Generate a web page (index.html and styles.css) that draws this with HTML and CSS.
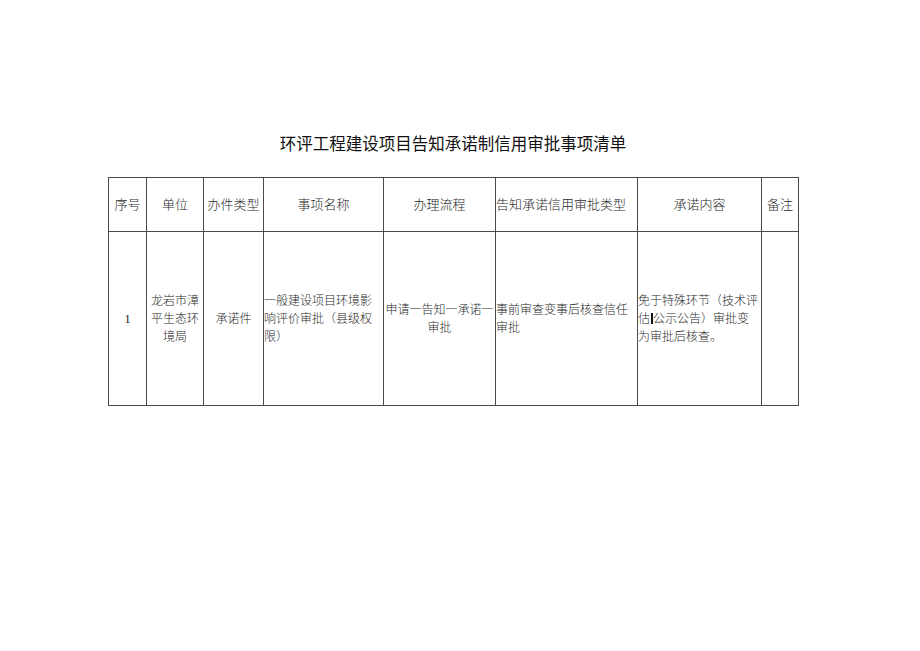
FILE: index.html
```html
<!DOCTYPE html>
<html lang="zh-CN">
<head>
<meta charset="utf-8">
<title>环评工程建设项目告知承诺制信用审批事项清单</title>
<link rel="stylesheet" href="styles.css">
</head>
<body>
<div class="page">
  <div class="sheet">
    <h1 class="title">环评工程建设项目告知承诺制信用审批事项清单</h1>
    <table class="list">
      <colgroup>
        <col class="c1"><col class="c2"><col class="c3"><col class="c4"><col class="c5"><col class="c6"><col class="c7"><col class="c8">
      </colgroup>
      <thead>
        <tr class="head">
          <th>序号</th>
          <th>单位</th>
          <th>办件类型</th>
          <th>事项名称</th>
          <th>办理流程</th>
          <th class="left">告知承诺信用审批类型</th>
          <th>承诺内容</th>
          <th>备注</th>
        </tr>
      </thead>
      <tbody>
        <tr class="row">
          <td class="num">1</td>
          <td>龙岩市漳平生态环境局</td>
          <td>承诺件</td>
          <td class="left">一般建设项目环境影响评价审批（县级权限）</td>
          <td>申请一告知一承诺一审批</td>
          <td class="left">事前审查变事后核查信任审批</td>
          <td class="left">免于特殊环节（技术评估<span class="bar"></span>公示公告）审批变为审批后核查。</td>
          <td></td>
        </tr>
      </tbody>
    </table>
  </div>
</div>
</body>
</html>
```
FILE: styles.css
```css
html, body {
  margin: 0;
  padding: 0;
  background: #ffffff;
}

.page {
  width: 920px;
  height: 651px;
  padding: 131px 0 0 108px;
  box-sizing: border-box;
}

.sheet {
  width: 690px;
}

.title {
  margin: 0 0 22px 0;
  font-family: "Noto Sans CJK SC", sans-serif;
  font-weight: 400;
  font-size: 16.5px;
  line-height: 24px;
  color: #111111;
  text-align: center;
}

.list {
  border-collapse: collapse;
  table-layout: fixed;
  width: 690px;
  font-family: "Liberation Serif", "Noto Sans CJK SC", serif;
  color: #2a2a2a;
}

.c1 { width: 38px; }
.c2 { width: 57px; }
.c3 { width: 60px; }
.c4 { width: 120px; }
.c5 { width: 112px; }
.c6 { width: 142px; }
.c7 { width: 124px; }
.c8 { width: 37px; }

.list th,
.list td {
  border: 1px solid #4a4a4a;
  padding: 0 1px;
  text-align: center;
  vertical-align: middle;
  overflow: hidden;
}

.list th {
  font-weight: 300;
  font-size: 13px;
  line-height: 18px;
  white-space: nowrap;
}

.head {
  height: 54px;
}

.row {
  height: 174px;
}

.list td {
  font-weight: 300;
  font-size: 12px;
  line-height: 18px;
}

.list .left {
  text-align: left;
  padding-left: 0;
}

.list td.num {
  font-family: "Liberation Serif", serif;
  font-weight: 400;
  font-size: 13px;
}

.bar {
  display: inline-block;
  width: 2px;
  height: 11px;
  margin: 0 0.5px;
  background: #111;
  vertical-align: -1px;
}
```
